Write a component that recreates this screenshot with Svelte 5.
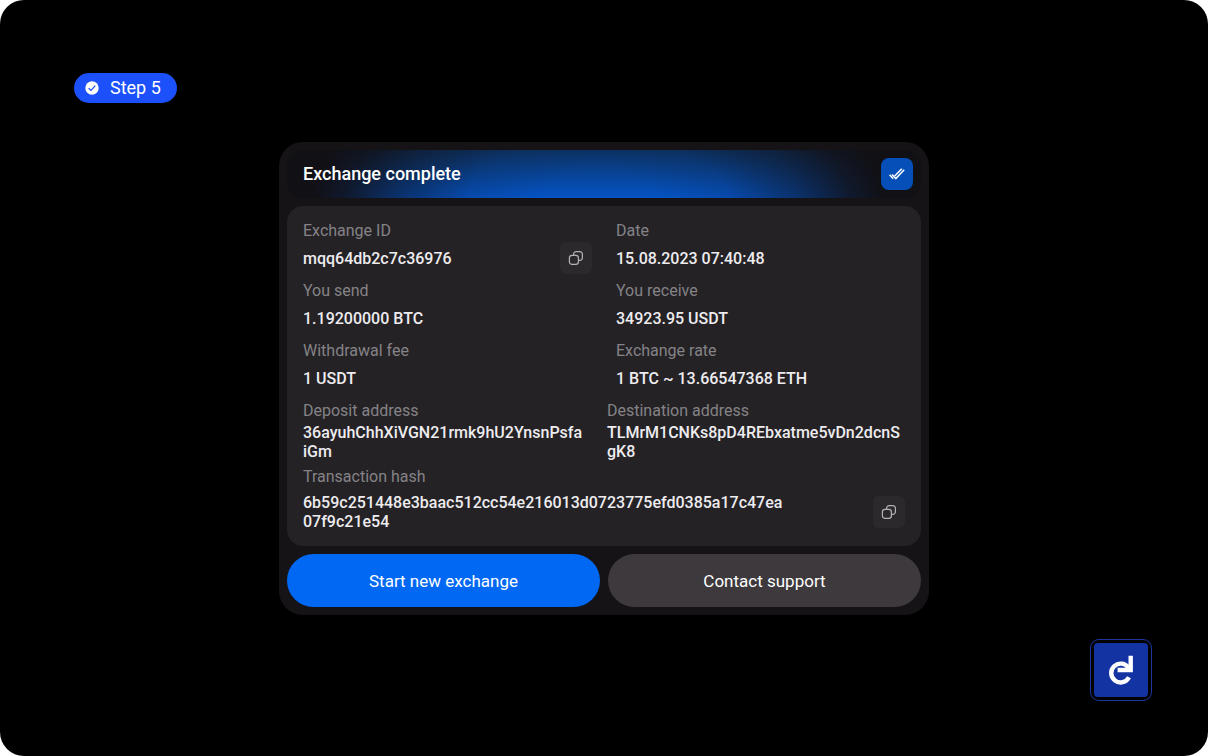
<script lang="ts">
  type Field = { label: string; value: string; copy?: boolean };

  const fields: Field[] = [
    { label: "Exchange ID", value: "mqq64db2c7c36976", copy: true },
    { label: "Date", value: "15.08.2023 07:40:48" },
    { label: "You send", value: "1.19200000 BTC" },
    { label: "You receive", value: "34923.95 USDT" },
    { label: "Withdrawal fee", value: "1 USDT" },
    { label: "Exchange rate", value: "1 BTC ~ 13.66547368 ETH" },
  ];

  const addresses: Field[] = [
    { label: "Deposit address", value: "36ayuhChhXiVGN21rmk9hU2YnsnPsfaiGm" },
    { label: "Destination address", value: "TLMrM1CNKs8pD4REbxatme5vDn2dcnSgK8" },
  ];

  const hash = "6b59c251448e3baac512cc54e216013d0723775efd0385a17c47ea07f9c21e54";

  function copy(text: string) {
    navigator.clipboard?.writeText(text);
  }
</script>

{#snippet copyButton(label: string, text: string)}
  <button class="copy" type="button" aria-label="Copy {label}" onclick={() => copy(text)}>
    <svg width="16" height="16" viewBox="0 0 16 16" fill="none" stroke="currentColor" stroke-width="1.2">
      <rect x="1.4" y="5.4" width="9" height="9" rx="2.6" />
      <path d="M5.6 5.4V4.2a2.6 2.6 0 0 1 2.6-2.6h3.6a2.6 2.6 0 0 1 2.6 2.6v3.6a2.6 2.6 0 0 1-2.6 2.6h-1.2" />
    </svg>
  </button>
{/snippet}

<main class="page">
  <div class="step">
    <svg width="14" height="14" viewBox="0 0 14 14" fill="none">
      <circle cx="7" cy="7" r="6.7" fill="#fff" />
      <path d="M3.6 7.2l2.4 2.3 4.3-4.8" stroke="#1b50fa" stroke-width="1.2" />
    </svg>
    <span>Step 5</span>
  </div>

  <section class="card">
    <header class="title">
      <h1>Exchange complete</h1>
      <span class="done">
        <svg width="16" height="16" viewBox="0 0 16 16" fill="none" stroke="#fff" stroke-width="1.5">
          <path d="M.6 8.8l3.6 4" />
          <path d="M3 8.6l3.8 4 8.4-8.8" />
          <path d="M5.6 10l7.2-7.2" />
        </svg>
      </span>
    </header>

    <div class="panel">
      <dl class="fields">
        {#each fields as field}
          <div>
            <dt>{field.label}</dt>
            <dd class="line">
              <span>{field.value}</span>
              {#if field.copy}
                {@render copyButton(field.label, field.value)}
              {/if}
            </dd>
          </div>
        {/each}
      </dl>

      <dl class="addresses">
        {#each addresses as address}
          <div>
            <dt>{address.label}</dt>
            <dd>{address.value}</dd>
          </div>
        {/each}
      </dl>

      <dl>
        <dt>Transaction hash</dt>
        <dd class="line hash">
          <span>{hash}</span>
          {@render copyButton("Transaction hash", hash)}
        </dd>
      </dl>
    </div>

    <div class="actions">
      <button class="action primary" type="button">Start new exchange</button>
      <button class="action" type="button">Contact support</button>
    </div>
  </section>

  <div class="logo">
    <svg viewBox="0 0 54 54" fill="none" stroke="#fff" stroke-width="4.4">
      <path d="M34.6 25A9.4 9.4 0 1 0 35 34.3" />
      <path d="M23.6 27H36.7V12.8" />
    </svg>
  </div>
</main>

<style>
  :global(body) {
    margin: 0;
    background: #fff;
  }

  .page {
    box-sizing: border-box;
    min-height: 100vh;
    padding: 73px 0 55px;
    display: flex;
    flex-direction: column;
    background: #000;
    border-radius: 24px;
    font-family: Roboto, "Liberation Sans", sans-serif;
    font-size: 16px;
    color: #fff;
  }

  .step {
    align-self: flex-start;
    display: flex;
    align-items: center;
    gap: 11px;
    height: 30px;
    margin-left: 74px;
    padding: 0 16px 0 11px;
    border-radius: 15px;
    background: #1b50fa;
    font-size: 18px;
    line-height: 20px;
  }

  .card {
    box-sizing: border-box;
    width: 100%;
    max-width: 650px;
    margin: 39px auto 24px;
    padding: 8px;
    display: flex;
    flex-direction: column;
    gap: 8px;
    border-radius: 24px;
    background: #151316;
  }

  .title {
    display: flex;
    align-items: center;
    justify-content: space-between;
    padding: 8px 8px 8px 16px;
    border-radius: 16px;
    background:
      radial-gradient(
        45% 280% at 49% 100%,
        rgba(17, 16, 21, 0) 20%,
        rgba(17, 16, 21, 0.12) 45%,
        rgba(17, 16, 21, 0.5) 70%,
        rgba(17, 16, 21, 0.85) 88%,
        #111015 100%
      ),
      linear-gradient(#0c3468, #0453c4);
  }

  h1 {
    margin: 0;
    font-size: 18px;
    font-weight: 500;
    line-height: 20px;
  }

  .done {
    display: flex;
    align-items: center;
    justify-content: center;
    width: 32px;
    height: 32px;
    border-radius: 8px;
    background: #064fb8;
  }

  .panel {
    display: flex;
    flex-direction: column;
    gap: 6px;
    padding: 15px 16px;
    border-radius: 16px;
    background: #242225;
  }

  dl,
  dd {
    margin: 0;
  }

  dt {
    margin-bottom: 2px;
    line-height: 20px;
    color: #858387;
  }

  dd {
    line-height: 19px;
    font-weight: 500;
    color: #eeecef;
    overflow-wrap: anywhere;
  }

  .fields {
    display: grid;
    grid-template-columns: 1fr 1fr;
    gap: 7px 24px;
    margin-bottom: 1px;
  }

  .fields dt {
    margin-bottom: 1px;
  }

  .addresses {
    display: grid;
    grid-template-columns: 280px 1fr;
    gap: 24px;
  }

  .line {
    display: flex;
    align-items: center;
    justify-content: space-between;
    min-height: 32px;
  }

  .hash {
    margin-top: 6px;
  }

  .hash span {
    max-width: 484px;
  }

  .copy {
    display: flex;
    align-items: center;
    justify-content: center;
    flex: none;
    width: 32px;
    height: 32px;
    padding: 0;
    border: none;
    border-radius: 6px;
    background: #2b292c;
    color: #b4b2b6;
    cursor: pointer;
  }

  .actions {
    display: grid;
    grid-template-columns: 1fr 1fr;
    gap: 8px;
  }

  .action {
    height: 53px;
    border: none;
    border-radius: 27px;
    background: #3d393c;
    color: #fff;
    font-family: inherit;
    font-size: 17px;
    cursor: pointer;
  }

  .primary {
    background: #0168f3;
  }

  .logo {
    box-sizing: border-box;
    align-self: flex-end;
    width: 62px;
    height: 62px;
    margin-right: 56px;
    padding: 3px;
    border: 1px solid #1c36a0;
    border-radius: 9px;
  }

  .logo svg {
    display: block;
    border-radius: 4px;
    background: #1333a2;
  }
</style>
